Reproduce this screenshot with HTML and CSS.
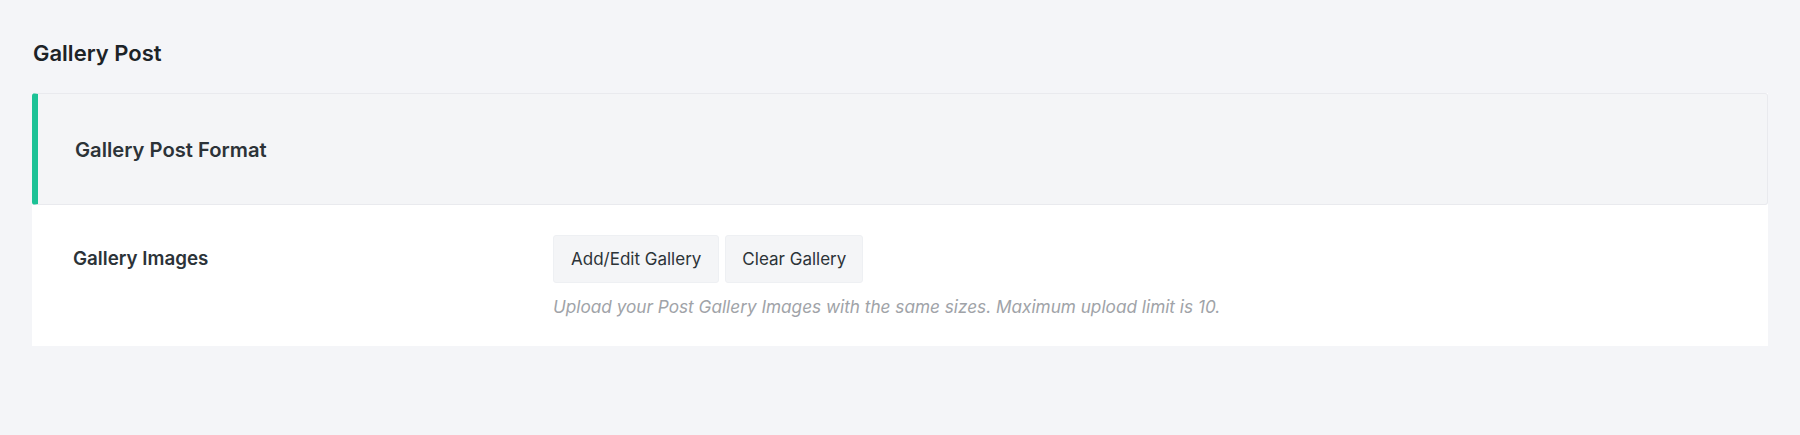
FILE: index.html
```html
<!DOCTYPE html>
<html lang="en">
<head>
<meta charset="utf-8">
<title>Gallery Post</title>
<link rel="stylesheet" href="styles.css">
</head>
<body>
<div class="page">
  <h1 class="page-title">Gallery Post</h1>
  <section class="card">
    <header class="card-header">
      <h2 class="card-title">Gallery Post Format</h2>
    </header>
    <div class="card-body">
      <div class="field-row">
        <div class="field-label">Gallery Images</div>
        <div class="field-control">
          <div class="btn-group">
            <button class="btn" type="button">Add/Edit Gallery</button>
            <button class="btn" type="button">Clear Gallery</button>
          </div>
          <p class="help">Upload your Post Gallery Images with the same sizes. Maximum upload limit is 10.</p>
        </div>
      </div>
    </div>
  </section>
</div>
</body>
</html>
```
FILE: styles.css
```css
* { box-sizing: border-box; }
html, body {
  margin: 0;
  padding: 0;
  background: #f4f5f8;
  font-family: Inter, "Noto Sans", "Liberation Sans", sans-serif;
  color: #1d2327;
}
.page {
  padding: 38px 32px 0 32px;
}
.page-title {
  margin: 0 0 25px 1px;
  font-size: 22px;
  line-height: 30px;
  font-weight: 600;
  color: #1d2327;
}
.card {
  background: #ffffff;
}
.card-header {
  height: 112px;
  display: flex;
  align-items: center;
  padding-left: 37px;
  padding-top: 1px;
  background: #f4f5f7;
  border: 1px solid #e9eaee;
  border-left: 6px solid #1cc296;
  border-radius: 3px;
}
.card-title {
  margin: 0;
  font-size: 20.2px;
  line-height: 24px;
  font-weight: 600;
  color: #2c3338;
}
.card-body {
  padding: 30px 40px 28px 41px;
}
.field-row {
  display: flex;
}
.field-label {
  width: 480px;
  flex: none;
  padding-top: 13px;
  font-size: 18.8px;
  line-height: 22px;
  font-weight: 600;
  color: #2c3338;
}
.field-control {
  display: flex;
  flex-direction: column;
}
.btn-group {
  display: flex;
  gap: 6px;
}
.btn {
  height: 48px;
  padding: 0 17px;
  font-family: inherit;
  font-size: 17px;
  font-weight: 400;
  color: #2c3338;
  background: #f4f5f7;
  border: 1px solid #eef0f3;
  border-radius: 3px;
}
.btn + .btn {
  padding: 0 16px;
}
.help {
  margin: 13px 0 0 0;
  font-size: 17.2px;
  line-height: 22px;
  font-style: italic;
  color: #a0a3a8;
}
```
